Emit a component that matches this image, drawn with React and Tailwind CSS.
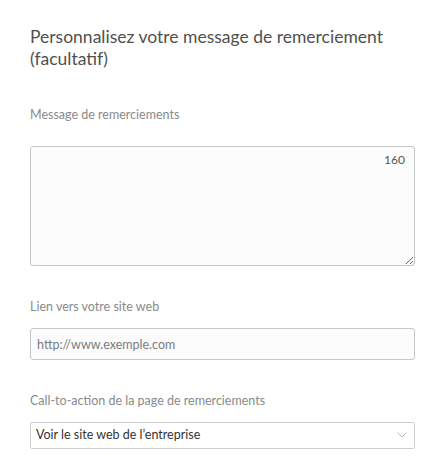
import React from 'react';

const font = { fontFamily: 'Lato, "Open Sans", sans-serif' };

const App = () => {
  return (
    <div className="w-[444px] h-[460px] bg-white overflow-hidden" style={font}>
      <div className="ml-[30px] w-[385px] pt-[26px]">
        <h2 className="text-[17.5px] leading-[22px] text-[#505050] font-normal">
          Personnalisez votre message de remerciement (facultatif)
        </h2>

        <label className="block mt-[37px] text-[12.5px] leading-[16px] text-[#8a8a8a]">
          Message de remerciements
        </label>
        <div className="relative mt-[23px]">
          <textarea
            className="block w-full h-[120px] rounded-[3px] border border-[#c6c6c6] bg-[#fcfcfc] resize-y outline-none p-2 text-[13px]"
            maxLength={160}
          />
          <span className="absolute top-[5px] right-[10px] text-[12px] text-[#555]">160</span>
        </div>

        <label className="block mt-[33px] text-[12.5px] leading-[16px] text-[#8a8a8a]">
          Lien vers votre site web
        </label>
        <input
          type="text"
          placeholder="http://www.exemple.com"
          className="block mt-[13px] w-full h-[32px] rounded-[3px] border border-[#c6c6c6] bg-[#fcfcfc] px-[6px] text-[12.5px] text-[#333] placeholder:text-[#7a7a7a] outline-none"
        />

        <label className="block mt-[33px] text-[12.5px] leading-[16px] text-[#8a8a8a]">
          Call-to-action de la page de remerciements
        </label>
        <div className="relative mt-[13px]">
          <div className="flex items-center w-full h-[27px] rounded-[2px] border border-[#d0d0d0] bg-white px-[5px] text-[12.5px] text-[#333]">
            Voir le site web de l’entreprise
          </div>
          <svg
            className="absolute right-[8px] top-[10px]"
            width="10"
            height="6"
            viewBox="0 0 10 6"
            fill="none"
            stroke="#b5b5b5"
            strokeWidth="1"
          >
            <path d="M0.5 0.5 L5 5 L9.5 0.5" />
          </svg>
        </div>
      </div>
    </div>
  );
};

export default App;
